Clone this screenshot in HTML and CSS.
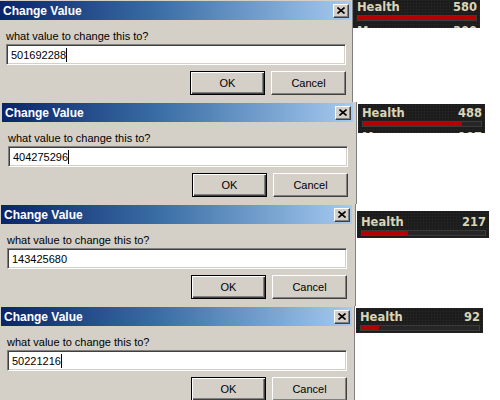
FILE: index.html
```html
<!DOCTYPE html>
<html lang="en">
<head>
  <meta charset="UTF-8">
  <title>Change Value</title>
  <link rel="stylesheet" href="styles.css">
</head>
<body>
  <div id="shots">

    <div class="shot shot-1">
      <div class="dialog">
        <div class="titlebar">
          <span class="title">Change Value</span>
          <span class="close"><svg width="8" height="7" viewBox="0 0 8 7"><path d="M0.5 0.5 L7.5 6.5 M7.5 0.5 L0.5 6.5" stroke="#000" stroke-width="1.6"/></svg></span>
        </div>
        <div class="dialog-body">
          <div class="prompt">what value to change this to?</div>
          <div class="field">501692288<span class="caret"></span></div>
          <div class="buttons">
            <div class="btn btn-default">OK</div>
            <div class="btn">Cancel</div>
          </div>
        </div>
      </div>
      <div class="hud">
        <div class="hud-row"><span>Health</span><span>580</span></div>
        <div class="hud-bar"><div class="hud-fill" style="width:100%"></div></div>
        <div class="hud-row"><span>Mana</span><span>300</span></div>
      </div>
    </div>

    <div class="shot shot-2">
      <div class="dialog">
        <div class="titlebar">
          <span class="title">Change Value</span>
          <span class="close"><svg width="8" height="7" viewBox="0 0 8 7"><path d="M0.5 0.5 L7.5 6.5 M7.5 0.5 L0.5 6.5" stroke="#000" stroke-width="1.6"/></svg></span>
        </div>
        <div class="dialog-body">
          <div class="prompt">what value to change this to?</div>
          <div class="field">404275296<span class="caret"></span></div>
          <div class="buttons">
            <div class="btn btn-default">OK</div>
            <div class="btn">Cancel</div>
          </div>
        </div>
      </div>
      <div class="hud">
        <div class="hud-row"><span>Health</span><span>488</span></div>
        <div class="hud-bar"><div class="hud-fill" style="width:84%"></div></div>
        <div class="hud-row"><span>Mana</span><span>107</span></div>
      </div>
    </div>

    <div class="shot shot-3">
      <div class="dialog">
        <div class="titlebar">
          <span class="title">Change Value</span>
          <span class="close"><svg width="8" height="7" viewBox="0 0 8 7"><path d="M0.5 0.5 L7.5 6.5 M7.5 0.5 L0.5 6.5" stroke="#000" stroke-width="1.6"/></svg></span>
        </div>
        <div class="dialog-body">
          <div class="prompt">what value to change this to?</div>
          <div class="field">143425680</div>
          <div class="buttons">
            <div class="btn btn-default">OK</div>
            <div class="btn">Cancel</div>
          </div>
        </div>
      </div>
      <div class="hud">
        <div class="hud-row"><span>Health</span><span>217</span></div>
        <div class="hud-bar"><div class="hud-fill" style="width:37%"></div></div>
      </div>
    </div>

    <div class="shot shot-4">
      <div class="dialog">
        <div class="titlebar">
          <span class="title">Change Value</span>
          <span class="close"><svg width="8" height="7" viewBox="0 0 8 7"><path d="M0.5 0.5 L7.5 6.5 M7.5 0.5 L0.5 6.5" stroke="#000" stroke-width="1.6"/></svg></span>
        </div>
        <div class="dialog-body">
          <div class="prompt">what value to change this to?</div>
          <div class="field">50221216<span class="caret"></span></div>
          <div class="buttons">
            <div class="btn btn-default">OK</div>
            <div class="btn">Cancel</div>
          </div>
        </div>
      </div>
      <div class="hud">
        <div class="hud-row"><span>Health</span><span>92</span></div>
        <div class="hud-bar"><div class="hud-fill" style="width:15%"></div></div>
      </div>
    </div>

  </div>
</body>
</html>
```

FILE: styles.css
```css
body {
  margin: 0;
  background: #fff;
  font-family: "Liberation Sans", Arial, sans-serif;
  font-size: 11px;
  color: #000;
  width: 500px;
  height: 400px;
  overflow: hidden;
}

#shots {
  display: flex;
  flex-direction: column;
}

.shot {
  display: flex;
  align-items: flex-start;
  height: 102px;
  flex-shrink: 0;
}

/* classic grey window */
.dialog {
  box-sizing: border-box;
  width: 353px;
  height: 102px;
  padding-top: 1px;
  background: #d4d0c8;
  border-right: 1px solid #808080;
  box-shadow: inset -1px 0 0 #d4d0c8;
  flex-shrink: 0;
}

.titlebar {
  display: flex;
  align-items: center;
  justify-content: space-between;
  width: 351px;
  height: 19px;
  background: linear-gradient(to right, #0a246a 0%, #3a6ea5 45%, #a6caf0 100%);
}

.title {
  padding-left: 3px;
  color: #fff;
  font-weight: bold;
  font-size: 12px;
}

.close {
  display: flex;
  align-items: center;
  justify-content: center;
  box-sizing: border-box;
  width: 16px;
  height: 14px;
  margin-right: 2px;
  background: #d4d0c8;
  border-top: 1px solid #fff;
  border-left: 1px solid #fff;
  border-right: 1px solid #404040;
  border-bottom: 1px solid #404040;
  box-shadow: inset -1px -1px 0 #808080;
}

.dialog-body {
  padding: 10px 0 0 6px;
}

.prompt {
  line-height: 13px;
  height: 13px;
}

.field {
  box-sizing: border-box;
  display: flex;
  align-items: center;
  width: 340px;
  height: 21px;
  margin-top: 1px;
  padding-left: 4px;
  background: #fff;
  border-top: 1px solid #808080;
  border-left: 1px solid #808080;
  border-right: 1px solid #fff;
  border-bottom: 1px solid #fff;
  box-shadow: inset 1px 1px 0 #404040, inset -1px -1px 0 #d4d0c8;
  font-size: 11px;
}

.caret {
  display: inline-block;
  width: 1px;
  height: 14px;
  background: #000;
}

.buttons {
  display: flex;
  justify-content: flex-end;
  gap: 6px;
  width: 340px;
  margin-top: 6px;
}

.btn {
  box-sizing: border-box;
  display: flex;
  align-items: center;
  justify-content: center;
  width: 75px;
  height: 24px;
  background: #d4d0c8;
  border-top: 1px solid #fff;
  border-left: 1px solid #fff;
  border-right: 1px solid #404040;
  border-bottom: 1px solid #404040;
  box-shadow: inset -1px -1px 0 #808080;
}

.btn-default {
  border: 1px solid #000;
  box-shadow: inset 1px 1px 0 #fff, inset -1px -1px 0 #404040, inset -2px -2px 0 #808080;
}

/* game health widget */
.hud {
  box-sizing: border-box;
  width: 127px;
  padding: 3px 3px 0 4px;
  background-color: #1b1b1b;
  background-image:
    repeating-linear-gradient(0deg, rgba(255,255,255,0.025) 0 1px, transparent 1px 3px),
    repeating-linear-gradient(90deg, rgba(255,255,255,0.025) 0 1px, transparent 1px 3px);
  overflow: hidden;
  flex-shrink: 0;
}

.hud-row {
  display: flex;
  justify-content: space-between;
  height: 13px;
  line-height: 13px;
  color: #d9d5b7;
  font-family: "DejaVu Sans", Verdana, sans-serif;
  font-weight: bold;
  font-size: 11.5px;
}

.hud-bar {
  height: 4px;
  margin: 1px 0 4px;
  background: #262626;
  border: 1px solid #3c3c3c;
}

.hud-fill {
  height: 100%;
  background: #b40000;
}

.shot-1 .hud { height: 29px; margin-top: -1px; padding-top: 2px; }
.shot-2 .dialog { width: 357px; padding-left: 2px; }
.shot-2 .hud { height: 29px; margin-top: 2px; margin-left: 1px; }
.shot-3 .dialog { width: 356px; padding-left: 1px; }
.shot-3 .hud { width: 132px; height: 27px; margin-top: 7px; margin-left: 1px; padding-top: 5px; }
.shot-4 .dialog { width: 355px; padding-left: 1px; }
.shot-4 .hud { height: 25px; margin-top: 2px; margin-left: 1px; }
```
